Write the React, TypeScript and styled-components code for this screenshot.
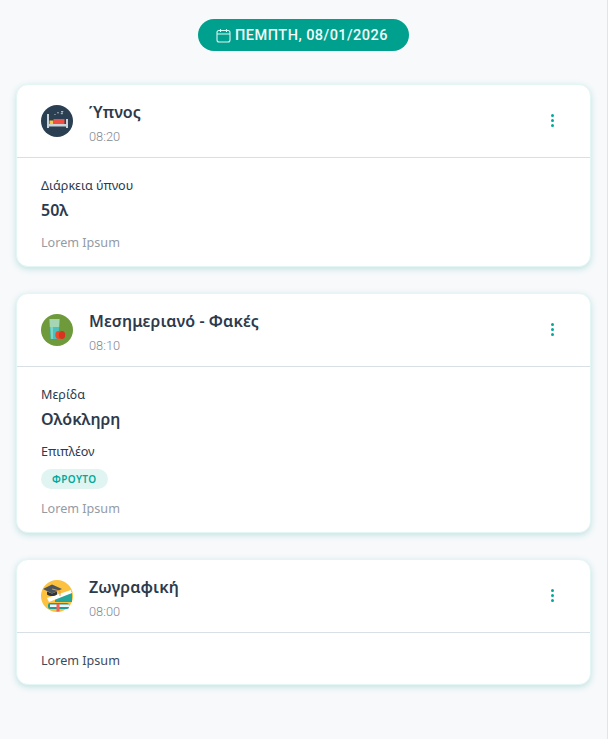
import styled, { createGlobalStyle } from "styled-components";

const Global = createGlobalStyle`
  html, body { margin: 0; padding: 0; background: #fff; }
  body { font-family: "Noto Sans", "Open Sans", sans-serif; color: #2c3a4d; }
`;

const Page = styled.div`
  width: 608px;
  height: 739px;
  overflow: hidden;
  box-sizing: border-box;
  padding: 19px 16px 0 16px;
  background: #f7f9fb;
  border-right: 1px solid #e2e4e7;
  display: flex;
  flex-direction: column;
`;

const DatePill = styled.div`
  align-self: center;
  margin: 0 0 33px 0;
  height: 32px;
  width: 211px;
  border-radius: 16px;
  background: #00a08e;
  color: #f2fbfa;
  display: flex;
  align-items: center;
  justify-content: center;
  gap: 4px;
  padding-right: 3px;
  box-sizing: border-box;
  font-family: Roboto, sans-serif;
  font-size: 14.5px;
  font-weight: 500;
  letter-spacing: 0.45px;
`;

const CardList = styled.div`
  display: flex;
  flex-direction: column;
  gap: 26px;
`;

const Card = styled.section`
  background: #fff;
  border-radius: 12px;
  border: 1px solid #e3f6f4;
  box-shadow: 0 2px 6px rgba(0, 150, 135, 0.22);
`;

const CardHeader = styled.header`
  height: 73px;
  box-sizing: border-box;
  display: flex;
  align-items: center;
  padding: 0 36px 1px 24px;
  border-bottom: 1px solid #d8e0e6;
`;

const Avatar = styled.svg`
  width: 32px;
  height: 32px;
  flex: none;
  display: block;
`;

const HeaderText = styled.div`
  flex: 1;
  margin: 4px 0 0 16px;
  display: flex;
  flex-direction: column;
  gap: 4px;
`;

const Title = styled.div`
  font-size: 16px;
  line-height: 24px;
  font-weight: 600;
  color: #2c3a4d;
  letter-spacing: 0.1px;
`;

const Time = styled.div`
  font-family: Roboto, sans-serif;
  font-size: 12.8px;
  font-weight: 300;
  line-height: 18px;
  color: #7f8994;
`;

const MenuDots = styled.div`
  display: flex;
  flex-direction: column;
  gap: 2px;
`;

const Dot = styled.span`
  width: 3.3px;
  height: 3.3px;
  border-radius: 50%;
  background: #00a99a;
`;

const CardBody = styled.div`
  padding: 19px 24px 14px;
  display: flex;
  flex-direction: column;
`;

const Label = styled.div`
  font-size: 12.6px;
  line-height: 18px;
  color: #2c3a4d;
`;

const Value = styled.div`
  font-size: 16px;
  line-height: 24px;
  font-weight: 600;
  margin: 3px 0 12px;
  color: #2c3a4d;
`;

const Tag = styled.span`
  align-self: flex-start;
  margin: 8px 0 11px;
  height: 20px;
  padding: 0 11px;
  border-radius: 10px;
  background: #e0f4f2;
  color: #00a99a;
  font-size: 10px;
  font-weight: 600;
  letter-spacing: 0.4px;
  display: flex;
  align-items: center;
`;

const Note = styled.div<{ $dark?: boolean }>`
  font-size: 12.6px;
  line-height: 18px;
  color: ${({ $dark }) => ($dark ? "#3d4a5c" : "#949ba4")};
`;

const SleepIcon = () => (
  <Avatar viewBox="0 0 32 32">
    <circle cx="16" cy="16" r="16" fill="#2b3f53" />
    <rect x="6" y="9" width="2" height="14" fill="#c9d3d8" />
    <rect x="25" y="14" width="2" height="9" fill="#c9d3d8" />
    <rect x="8" y="19" width="17" height="2.500" fill="#c9d3d8" />
    <rect x="8.500" y="15.500" width="4" height="3.500" fill="#f6c945" />
    <rect x="12.500" y="14" width="11" height="5" fill="#ef5043" />
    <path d="M20 6.500h2l-2 2.200h2" stroke="#c9d3d8" strokeWidth="0.8" fill="none" />
    <circle cx="14" cy="9.500" r="0.600" fill="#c9d3d8" />
    <circle cx="17" cy="7.800" r="0.700" fill="#c9d3d8" />
  </Avatar>
);

const LunchIcon = () => (
  <Avatar viewBox="0 0 32 32">
    <circle cx="16" cy="16" r="16" fill="#6f9a3c" />
    <path d="M8.500 5h10l-1 20h-8z" fill="#4cc0bd" />
    <path d="M8.500 5h10l-.4 8h-9.200z" fill="#a5d6b4" />
    <path d="M9.500 13h2.500v12h-1.800z" fill="#7fd3c8" />
    <ellipse cx="17.500" cy="21" rx="3.200" ry="4" fill="#ee4a2c" />
    <ellipse cx="21" cy="21" rx="3.200" ry="4" fill="#d7331f" />
  </Avatar>
);

const DrawingIcon = () => (
  <Avatar viewBox="0 0 32 32">
    <circle cx="16" cy="16" r="16" fill="#fcc13f" />
    <path d="M14 17L31 11V22H14z" fill="#26a69a" />
    <path d="M6 18L30 10l1 3L8 22z" fill="#ffffff" />
    <rect x="7" y="23" width="21" height="6" rx="2" fill="#1f9d94" />
    <rect x="9" y="24.500" width="19" height="2.500" fill="#f4f4f4" />
    <rect x="15.500" y="24" width="3" height="7.500" fill="#f2605a" />
    <path d="M6 11.500v3c3 2 7 2 10 0v-3l-5 2z" fill="#2b3440" />
    <path d="M2 9l9-4.500L21 9l-10 4.500z" fill="#4a5560" />
    <path d="M11 9l8 2v5" stroke="#e89b2c" strokeWidth="1" fill="none" />
  </Avatar>
);

const CalendarIcon = () => (
  <svg width="15" height="15" viewBox="0 0 15 15" fill="none" stroke="#dff5f2" strokeWidth="1.100">
    <rect x="1" y="2.500" width="13" height="11.500" rx="2" />
    <path d="M1 6h13M4.500 1v3M10.500 1v3" />
  </svg>
);

const Menu = () => (
  <MenuDots>
    <Dot />
    <Dot />
    <Dot />
  </MenuDots>
);

export default function App() {
  return (
    <Page>
      <Global />
      <DatePill>
        <CalendarIcon />
        ΠΕΜΠΤΗ, 08/01/2026
      </DatePill>
      <CardList>
        <Card>
          <CardHeader>
            <SleepIcon />
            <HeaderText>
              <Title>Ύπνος</Title>
              <Time>08:20</Time>
            </HeaderText>
            <Menu />
          </CardHeader>
          <CardBody>
            <Label>Διάρκεια ύπνου</Label>
            <Value>50λ</Value>
            <Note>Lorem Ipsum</Note>
          </CardBody>
        </Card>
        <Card>
          <CardHeader>
            <LunchIcon />
            <HeaderText>
              <Title>Μεσημεριανό - Φακές</Title>
              <Time>08:10</Time>
            </HeaderText>
            <Menu />
          </CardHeader>
          <CardBody>
            <Label>Μερίδα</Label>
            <Value>Ολόκληρη</Value>
            <Label>Επιπλέον</Label>
            <Tag>ΦΡΟΥΤΟ</Tag>
            <Note>Lorem Ipsum</Note>
          </CardBody>
        </Card>
        <Card>
          <CardHeader>
            <DrawingIcon />
            <HeaderText>
              <Title>Ζωγραφική</Title>
              <Time>08:00</Time>
            </HeaderText>
            <Menu />
          </CardHeader>
          <CardBody>
            <Note $dark>Lorem Ipsum</Note>
          </CardBody>
        </Card>
      </CardList>
    </Page>
  );
}
